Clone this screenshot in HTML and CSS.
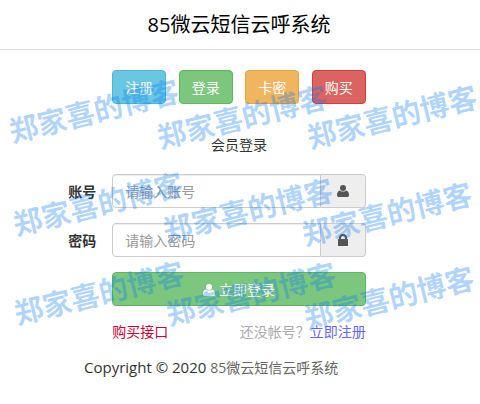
FILE: index.html
```html
<!DOCTYPE html>
<html lang="zh-CN">
  <head>
    <meta charset="UTF-8" />
    <meta name="viewport" content="width=device-width, initial-scale=1.0" />
    <title>85微云短信云呼系统</title>
    <link rel="stylesheet" href="styles.css">
  </head>
  <body>
    <!-- Shared icons -->
    <svg class="sprite" aria-hidden="true">
      <symbol id="icon-user" viewBox="0 0 12 12">
        <circle cx="6" cy="3" r="3" />
        <path d="M3 5.4C1 5.6 0 7.4 0 9.9 0 11.200 .8 12 2 12H10C11.200 12 12 11.200 12 9.900 12 7.400 11 5.600 9 5.400 7.400 7 4.600 7 3 5.400Z" />
      </symbol>
      <symbol id="icon-lock" viewBox="0 0 12 12">
        <path d="M2 5V4a4 4 0 0 1 8 0V5H10.500Q11 5 11 5.600V11.400Q11 12 10.400 12H1.600Q1 12 1 11.400V5.600Q1 5 1.500 5ZM4 5H8V4a2 2 0 0 0-4 0Z" />
      </symbol>
    </svg>

    <header class="header">
      <h1>85微云短信云呼系统</h1>
    </header>

    <main>
      <!-- Navigation -->
      <nav class="nav">
        <a class="btn btn-info" href="#reg">注册</a>
        <a class="btn btn-success" href="#login">登录</a>
        <a class="btn btn-warning" href="#card">卡密</a>
        <a class="btn btn-danger" href="#buy">购买</a>
      </nav>

      <h2 class="subtitle">会员登录</h2>

      <!-- Login form -->
      <form id="login" class="form">
        <div class="row">
          <label for="user">账号</label>
          <div class="input-group">
            <input type="text" id="user" name="user" placeholder="请输入账号" />
            <span class="addon"><svg class="icon"><use href="#icon-user" /></svg></span>
          </div>
        </div>
        <div class="row">
          <label for="pass">密码</label>
          <div class="input-group">
            <input type="password" id="pass" name="pass" placeholder="请输入密码" />
            <span class="addon"><svg class="icon"><use href="#icon-lock" /></svg></span>
          </div>
        </div>
        <div class="row">
          <button type="submit" class="btn btn-success submit">
            <svg class="icon"><use href="#icon-user" /></svg>立即登录
          </button>
        </div>
        <div class="row">
          <div class="links">
            <a class="buy" href="#buy">购买接口</a>
            <span class="hint">还没帐号？<a href="#reg">立即注册</a></span>
          </div>
        </div>
      </form>
    </main>

    <footer class="footer">Copyright © 2020 <a href="#home">85微云短信云呼系统</a></footer>

    <!-- Watermark layer -->
    <div class="watermarks" aria-hidden="true">
      <span class="mark m1">郑家喜的博客</span>
      <span class="mark m2">郑家喜的博客</span>
      <span class="mark m3">郑家喜的博客</span>
      <span class="mark m4">郑家喜的博客</span>
      <span class="mark m5">郑家喜的博客</span>
      <span class="mark m6">郑家喜的博客</span>
      <span class="mark m7">郑家喜的博客</span>
      <span class="mark m8">郑家喜的博客</span>
      <span class="mark m9">郑家喜的博客</span>
    </div>
  </body>
</html>
```

FILE: styles.css
```css
* {
  box-sizing: border-box;
}

body {
  position: relative;
  margin: 0;
  background-color: #fff;
  color: #333;
  font-family: "Open Sans", "Noto Sans CJK SC", sans-serif;
  font-size: 14px;
  line-height: 20px;
}

a {
  text-decoration: none;
}

.sprite {
  display: none;
}

.icon {
  width: 12px;
  height: 12px;
  fill: currentColor;
}

/* Header */
.header {
  padding: 10px 2px 10px 0;
  border-bottom: 1px solid #ddd;
  text-align: center;
}

.header h1 {
  margin: 0;
  color: #000;
  font-size: 20px;
  font-weight: 400;
  line-height: 29px;
}

main {
  padding-right: 2px;
}

/* Buttons */
.btn {
  display: inline-flex;
  justify-content: center;
  align-items: center;
  padding: 7px 12px 5px;
  border: 1px solid;
  border-radius: 4px;
  color: #fff;
  font: inherit;
  cursor: pointer;
}

.btn-info {
  background-color: #6bc6e1;
  border-color: #46b8da;
}

.btn-success {
  background-color: #7dc67d;
  border-color: #5cb85c;
}

.btn-warning {
  background-color: #f1b55f;
  border-color: #eea236;
}

.btn-danger {
  background-color: #dc6460;
  border-color: #d43f3a;
}

.nav {
  display: flex;
  justify-content: space-between;
  width: 53%;
  margin: 20px auto 0;
}

.subtitle {
  margin: 31px 0 19px;
  font-size: 14px;
  font-weight: 400;
  text-align: center;
}

/* Form */
.form {
  display: grid;
  gap: 15px;
}

.row {
  display: grid;
  grid-template-columns: 1fr 53% 1fr;
  column-gap: 16px;
  align-items: center;
}

.row label {
  padding-top: 2px;
  font-weight: 700;
  text-align: right;
}

.input-group {
  display: flex;
  height: 34px;
}

.input-group input {
  flex: 1;
  min-width: 0;
  padding: 7px 12px 5px;
  border: 1px solid #ccc;
  border-radius: 4px 0 0 4px;
  box-shadow: inset 0 1px 1px rgba(0, 0, 0, 0.075);
  color: #555;
  font: inherit;
}

.input-group input::placeholder {
  color: #999;
}

.addon {
  display: flex;
  justify-content: center;
  align-items: center;
  width: 45px;
  border: 1px solid #ccc;
  border-left: 0;
  border-radius: 0 4px 4px 0;
  background-color: #eee;
  color: #555;
}

.submit,
.links {
  grid-column: 2;
}

.submit {
  gap: 4px;
}

.links {
  display: flex;
  justify-content: space-between;
  padding-top: 1px;
}

.buy {
  color: #c03;
}

.hint {
  color: #aaa;
}

.hint a {
  color: #66f;
}

/* Footer */
.footer {
  margin-top: 15px;
  padding: 0 12% 24px 84px;
  font-size: 15px;
}

.footer a {
  color: #666;
  font-size: 14px;
}

/* Watermarks */
.watermarks {
  position: absolute;
  inset: 0;
  overflow: hidden;
  pointer-events: none;
}

.mark {
  position: absolute;
  color: rgba(0, 122, 255, 0.31);
  font-size: 29px;
  font-weight: 700;
  line-height: 40px;
  white-space: nowrap;
  transform: rotate(-14deg);
}

.m1 {
  left: 7px;
  top: 91px;
}

.m2 {
  left: 155px;
  top: 97px;
}

.m3 {
  left: 305px;
  top: 97px;
}

.m4 {
  left: 11px;
  top: 184px;
}

.m5 {
  left: 161px;
  top: 190px;
}

.m6 {
  left: 300px;
  top: 194px;
}

.m7 {
  left: 12px;
  top: 273px;
}

.m8 {
  left: 164px;
  top: 274px;
}

.m9 {
  left: 302px;
  top: 278px;
}
```
